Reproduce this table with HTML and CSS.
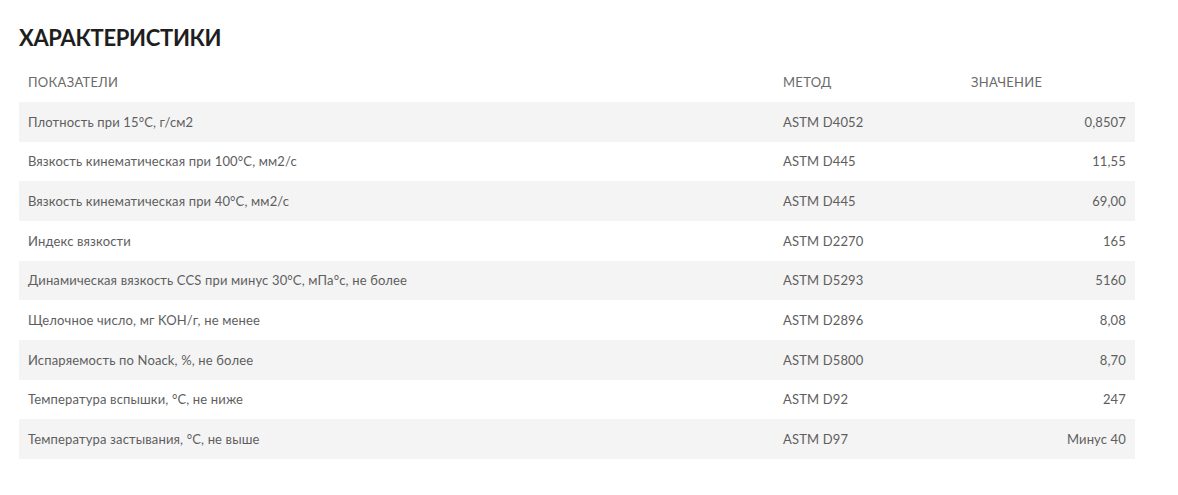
FILE: index.html
```html
<!DOCTYPE html>
<html lang="ru">
<head>
<meta charset="utf-8">
<link rel="stylesheet" href="styles.css">
</head>
<body>
<section class="specs">
  <h2 class="specs-title">ХАРАКТЕРИСТИКИ</h2>
  <table class="specs-table">
    <thead>
      <tr>
        <th class="col-name">Показатели</th>
        <th class="col-method">Метод</th>
        <th class="col-value">Значение</th>
      </tr>
    </thead>
    <tbody>
      <tr><td>Плотность при 15°C, г/см2</td><td>ASTM D4052</td><td class="val">0,8507</td></tr>
      <tr><td>Вязкость кинематическая при 100°C, мм2/с</td><td>ASTM D445</td><td class="val">11,55</td></tr>
      <tr><td>Вязкость кинематическая при 40°C, мм2/с</td><td>ASTM D445</td><td class="val">69,00</td></tr>
      <tr><td>Индекс вязкости</td><td>ASTM D2270</td><td class="val">165</td></tr>
      <tr><td>Динамическая вязкость CCS при минус 30°C, мПа°с, не более</td><td>ASTM D5293</td><td class="val">5160</td></tr>
      <tr><td>Щелочное число, мг KOH/г, не менее</td><td>ASTM D2896</td><td class="val">8,08</td></tr>
      <tr><td>Испаряемость по Noack, %, не более</td><td>ASTM D5800</td><td class="val">8,70</td></tr>
      <tr><td>Температура вспышки, °C, не ниже</td><td>ASTM D92</td><td class="val">247</td></tr>
      <tr><td>Температура застывания, °C, не выше</td><td>ASTM D97</td><td class="val">Минус 40</td></tr>
    </tbody>
  </table>
</section>
</body>
</html>
```

FILE: styles.css
```css
html, body {
  margin: 0;
  padding: 0;
  background: #ffffff;
}
body {
  font-family: Lato, "Open Sans", sans-serif;
  color: #555;
}
.specs {
  padding: 24px 43px 0 19px;
}
.specs-title {
  margin: 0;
  font-size: 22px;
  line-height: 28px;
  font-weight: 700;
  color: #1e1e1e;
  letter-spacing: -0.3px;
}
.specs-table {
  margin-top: 10px;
  width: 100%;
  border-collapse: collapse;
  font-size: 13px;
}
.specs-table th {
  text-align: left;
  font-weight: 400;
  text-transform: uppercase;
  color: #6a6a6a;
  height: 40px;
  padding: 0 9px;
  letter-spacing: 0.3px;
}
.specs-table td {
  height: 39.67px;
  padding: 0 9px;
  color: #5e5e5e;
  letter-spacing: 0.15px;
}
.specs-table .col-method { width: 170px; }
.specs-table .col-value { width: 155px; }
.specs-table tbody tr:nth-child(odd) td {
  background: #f4f4f4;
}
.specs-table td.val {
  text-align: right;
}
```
